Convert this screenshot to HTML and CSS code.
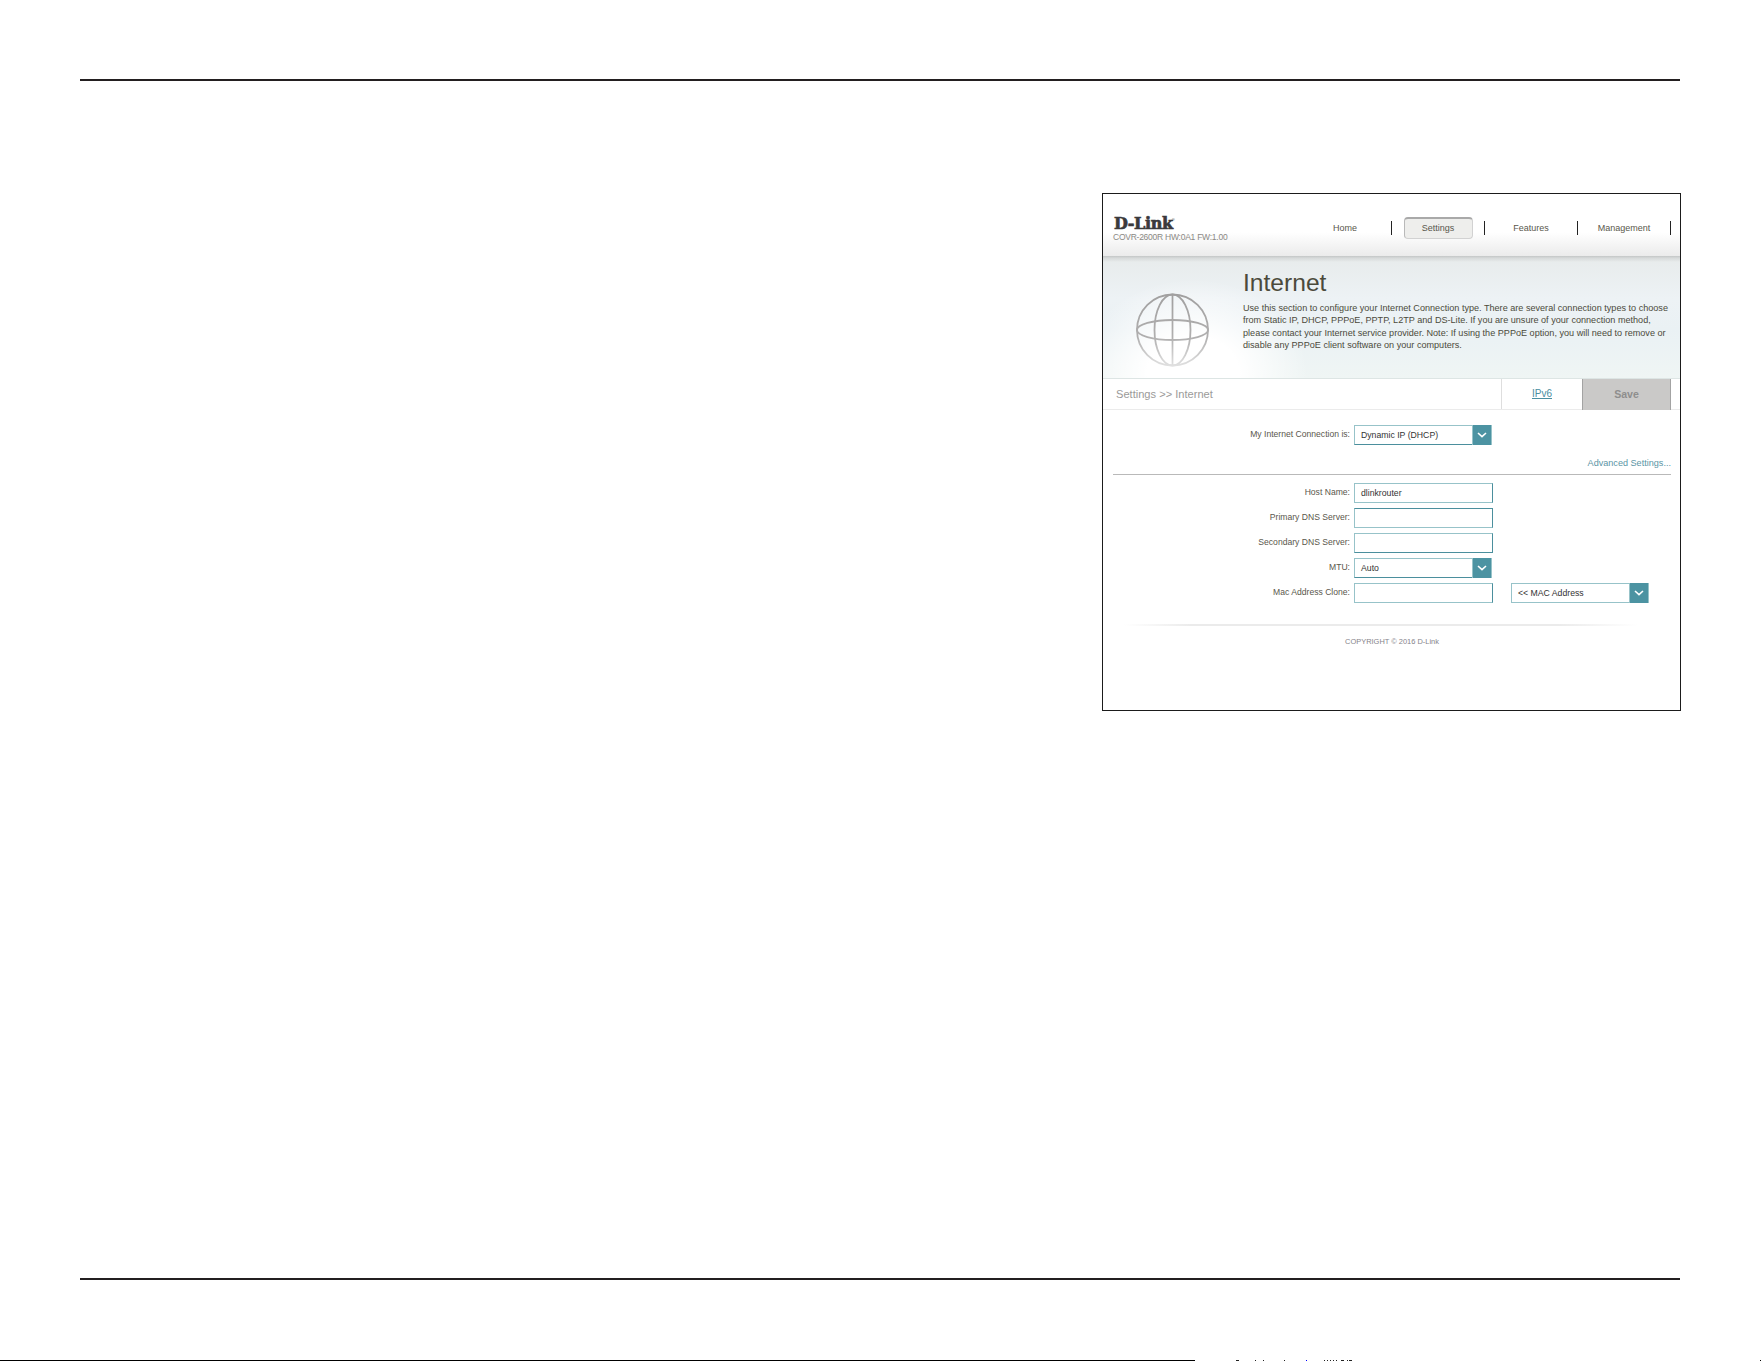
FILE: index.html
```
<!DOCTYPE html>
<html lang="en">
<head>
<meta charset="utf-8">
<title>D-Link - Internet</title>
<link rel="stylesheet" href="styles.css">
</head>
<body>
<div class="sheet">
    <div class="router">
        <header class="top">
            <div class="brand">
                <div class="logo">D-Link<span class="reg">®</span></div>
                <div class="model">COVR-2600R HW:0A1 FW:1.00</div>
            </div>
            <nav class="menu">
                <a class="item"><span class="label">Home</span></a>
                <a class="item"><span class="label active">Settings</span></a>
                <a class="item"><span class="label">Features</span></a>
                <a class="item"><span class="label">Management</span></a>
            </nav>
        </header>
        <section class="hero">
            <svg class="globe" viewBox="0 0 74 76" width="74" height="76">
                <defs>
                    <linearGradient id="fade" gradientUnits="userSpaceOnUse" x1="0" y1="0" x2="0" y2="75">
                        <stop offset="0" stop-color="#a09f9f"/>
                        <stop offset="0.6" stop-color="#b0afaf"/>
                        <stop offset="1" stop-color="#e2e2e2"/>
                    </linearGradient>
                </defs>
                <g fill="none" stroke="url(#fade)" stroke-width="1.8">
                    <circle cx="37.5" cy="38" r="35.5"/>
                    <ellipse cx="37.5" cy="38" rx="18" ry="35.5"/>
                    <ellipse cx="37.5" cy="38" rx="35.5" ry="10"/>
                    <path d="M37.51 2L37.5 73"/>
                </g>
            </svg>
            <div class="intro">
                <h1>Internet</h1>
                <p>Use this section to configure your Internet Connection type. There are several connection types to choose<br>
                from Static IP, DHCP, PPPoE, PPTP, L2TP and DS-Lite. If you are unsure of your connection method,<br>
                please contact your Internet service provider. Note: If using the PPPoE option, you will need to remove or<br>
                disable any PPPoE client software on your computers.</p>
            </div>
        </section>
        <div class="bar">
            <span class="crumbs">Settings &gt;&gt; Internet</span>
            <a class="ipv6"><u>IPv6</u></a>
            <span class="save">Save</span>
        </div>
        <main class="form">
            <div class="row">
                <label>My Internet Connection is:</label>
                <div class="select dark-bottom"><span>Dynamic IP (DHCP)</span><i><svg viewBox="0 0 10 6" width="10" height="6"><path d="M1 1l4 3.6L9 1"/></svg></i></div>
            </div>
            <div class="advanced">Advanced Settings...</div>
            <div class="row">
                <label>Host Name:</label>
                <div class="input">dlinkrouter</div>
            </div>
            <div class="row">
                <label>Primary DNS Server:</label>
                <div class="input dark-top"></div>
            </div>
            <div class="row">
                <label>Secondary DNS Server:</label>
                <div class="input dark-bottom"></div>
            </div>
            <div class="row">
                <label>MTU:</label>
                <div class="select dark-bottom"><span>Auto</span><i><svg viewBox="0 0 10 6" width="10" height="6"><path d="M1 1l4 3.6L9 1"/></svg></i></div>
            </div>
            <div class="row">
                <label>Mac Address Clone:</label>
                <div class="input"></div>
                <div class="select mac"><span>&lt;&lt; MAC Address</span><i><svg viewBox="0 0 10 6" width="10" height="6"><path d="M1 1l4 3.6L9 1"/></svg></i></div>
            </div>
        </main>
        <footer class="copyright">COPYRIGHT © 2016 D-Link</footer>
    </div>
</div>
<div class="edge"></div>
</body>
</html>
```
FILE: styles.css
```
* {
    box-sizing: border-box;
}

body {
    margin: 0;
    height: 1361px;
    display: flex;
    flex-direction: column;
    overflow: hidden;
    background: #fff;
    font-family: "Liberation Sans", Arial, sans-serif;
    font-size: 8.7px;
    color: #5a574c;
}

.sheet {
    margin: 79px 81px 0 80px;
    width: 1600px;
    height: 1201px;
    border-top: 2px solid #231f20;
    border-bottom: 2px solid #231f20;
}

.router {
    width: 579px;
    height: 518px;
    margin: 112px 0 0 1022px;
    border: 1px solid #1b1b1b;
    background: #fff;
}

/* header */
.top {
    display: flex;
    justify-content: space-between;
    height: 62px;
    padding: 22px 9px 0 10px;
    background: linear-gradient(to bottom, #fff 0%, #fff 62%, #ebebeb 100%);
}

.logo {
    height: 16px;
    padding-left: 1px;
    font: bold 16px/16px "DejaVu Serif", serif;
    letter-spacing: -0.35px;
    color: #3a3a3c;
    -webkit-text-stroke: 0.7px #3a3a3c;
}

.reg {
    font: 4px/4px "Liberation Sans", Arial, sans-serif;
    vertical-align: 8px;
    margin-left: -1px;
    -webkit-text-stroke: 0;
}

.model {
    font-size: 8.5px;
    line-height: 10px;
    letter-spacing: -0.25px;
    color: #8b8984;
    white-space: nowrap;
}

.menu {
    display: flex;
    padding-top: 1px;
    font-size: 9px;
}

.item {
    display: flex;
    align-items: center;
    justify-content: center;
    width: 93px;
    height: 14px;
    margin-top: 4px;
    border-right: 1px solid #222;
}

.label {
    width: 69px;
    height: 22px;
    flex: none;
    line-height: 22px;
    text-align: center;
}

.active {
    border: 1px solid #d2d2d2;
    border-top: 2px solid #a9a9a9;
    border-left-color: #b9b9b9;
    border-radius: 4px;
    background: #eeeeec;
    line-height: 19px;
}

/* title area */
.hero {
    display: flex;
    height: 123px;
    border-bottom: 1px solid #dde5e4;
    background:
        linear-gradient(to bottom, #c3c6c6 0, #d6d9d9 2px, rgba(226, 230, 230, 0) 6px),
        radial-gradient(ellipse 115px 95px at 90px 118px, #fff 40%, rgba(255, 255, 255, 0) 100%),
        linear-gradient(to bottom, #e7ebeb 0%, #edf2f5 35%, #eaf1f4 60%, #eff5f4 100%);
}

.globe {
    margin: 36px 0 0 32px;
}

.intro {
    padding-left: 34px;
    color: #4b4a3b;
}

.intro h1 {
    margin: 13px 0 0;
    font-size: 24.6px;
    font-weight: normal;
    line-height: 28px;
}

.intro p {
    margin: 5px 0 0;
    font-size: 9.1px;
    line-height: 12.4px;
    white-space: nowrap;
}

/* breadcrumb bar */
.bar {
    display: flex;
    height: 31px;
    padding-right: 9px;
    border-bottom: 1px solid #ebebeb;
    line-height: 30px;
}

.crumbs {
    flex: 1;
    padding-left: 13px;
    font-size: 11.1px;
    color: #9b9a99;
}

.ipv6 {
    width: 81px;
    border-left: 1px solid #dedede;
    font-size: 10px;
    text-align: center;
    color: #4a8ea0;
}

.save {
    width: 89px;
    height: 31px;
    border: solid #a3a3a3;
    border-width: 0 1px 0 1px;
    background: #cac9c8;
    font-size: 10.6px;
    font-weight: bold;
    text-align: center;
    color: #8f8e8e;
}

/* form */
.form {
    padding: 15px 9px 0 10px;
}

.row {
    display: flex;
    height: 20px;
    margin-bottom: 5px;
    line-height: 18px;
}

.row label {
    width: 237px;
    margin-right: 4px;
    text-align: right;
    font-size: 8.6px;
    line-height: 19px;
}

.input,
.select {
    height: 20px;
    border: 1px solid #97c3c9;
    color: #333;
    white-space: nowrap;
}

.input {
    width: 139px;
    padding-left: 6px;
    border-right-color: #4b8f9d;
}

.select {
    display: flex;
    width: 138px;
}

.select span {
    flex: 1;
    padding-left: 6px;
}

.select i {
    display: flex;
    align-items: center;
    justify-content: center;
    width: 19px;
    height: 20px;
    margin: -1px -1px 0 0;
    border-right: 1px solid #97c3c9;
    background: #4c93a2;
    box-shadow: -1px 0 #97c3c9;
}

.select path {
    fill: none;
    stroke: #fff;
    stroke-width: 1.6;
}

.dark-top {
    border-top-color: #4b8f9d;
}

.dark-bottom {
    border-bottom-color: #4b8f9d;
}

.mac {
    margin-left: 18px;
}

.advanced {
    height: 25px;
    margin-bottom: 8px;
    padding-top: 8px;
    border-bottom: 1px solid #b9b9b9;
    font-size: 9.1px;
    line-height: 10px;
    text-align: right;
    color: #5b95a5;
}

/* footer */
.copyright {
    width: 558px;
    margin: 21px 0 0 10px;
    padding-top: 13px;
    background: linear-gradient(to right, transparent 2%, #ebebeb 14%, #ebebeb 80%, transparent 94%) top / 100% 2px no-repeat;
    font-size: 7.45px;
    line-height: 10px;
    text-align: center;
    color: #85838a;
}

/* strip along the bottom edge */
.edge {
    height: 1px;
    margin-top: 80px;
    background:
        linear-gradient(#222, #222) 1236px 0 / 3px 1px no-repeat,
        linear-gradient(#222, #222) 1255px 0 / 1px 1px no-repeat,
        linear-gradient(#222, #222) 1263px 0 / 1px 1px no-repeat,
        linear-gradient(#222, #222) 1284px 0 / 1px 1px no-repeat,
        linear-gradient(#00f, #00f) 1306px 0 / 1px 1px no-repeat,
        repeating-linear-gradient(to right, #222 0 1px, #fff 1px 3px) 1324px 0 / 13px 1px no-repeat,
        linear-gradient(#222, #222) 1341px 0 / 3px 1px no-repeat,
        linear-gradient(#222, #222) 1347px 0 / 1px 1px no-repeat,
        linear-gradient(#222, #222) 1349px 0 / 3px 1px no-repeat,
        linear-gradient(#000, #000) 1760px 0 / 1px 1px no-repeat,
        linear-gradient(#000, #000) 0 0 / 1195px 1px no-repeat;
}
```
